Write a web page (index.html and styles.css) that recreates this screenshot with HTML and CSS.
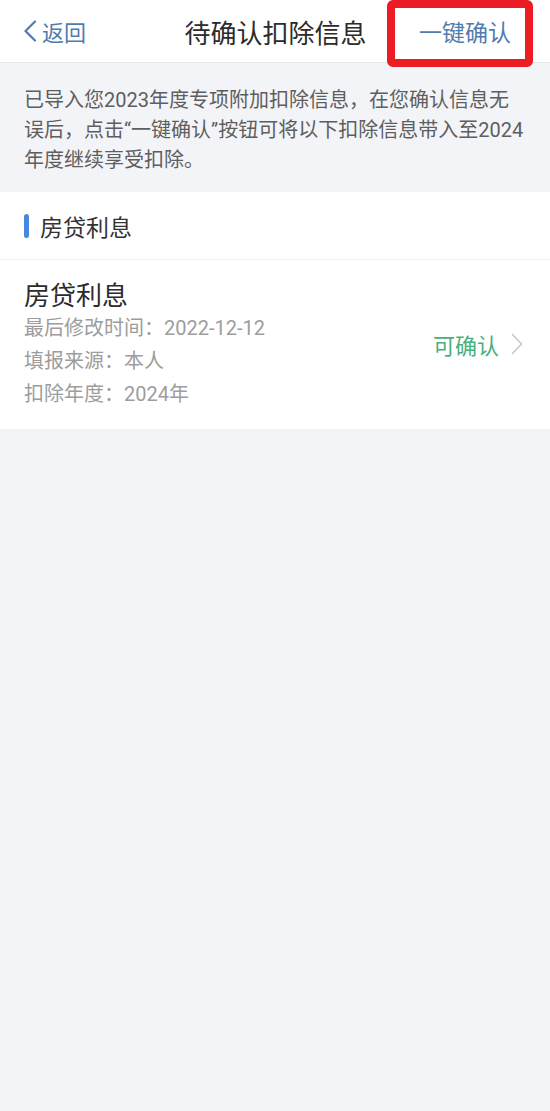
FILE: index.html
```html
<!DOCTYPE html>
<html lang="zh-CN">
<head>
<meta charset="utf-8">
<title>待确认扣除信息</title>
<link rel="stylesheet" href="styles.css">
</head>
<body>
<div class="page">
  <header class="nav">
    <div class="back">
      <svg class="back-icon" width="14" height="22" viewBox="0 0 14 22"><path d="M12 1.5 L2.5 11 L12 20.5" fill="none" stroke="#4f7cae" stroke-width="2.2" stroke-linecap="round" stroke-linejoin="round"/></svg>
      <span>返回</span>
    </div>
    <div class="title">待确认扣除信息</div>
    <div class="action">一键确认</div>
    <div class="highlight"></div>
  </header>
  <p class="notice">已导入您2023年度专项附加扣除信息，在您确认信息无误后，点击“一键确认”按钮可将以下扣除信息带入至2024年度继续享受扣除。</p>
  <section class="group">
    <div class="group-head"><span class="bar"></span><span>房贷利息</span></div>
    <div class="item">
      <div class="item-info">
        <div class="item-title">房贷利息</div>
        <div class="item-line">最后修改时间：2022-12-12</div>
        <div class="item-line">填报来源：本人</div>
        <div class="item-line">扣除年度：2024年</div>
      </div>
      <div class="item-status">
        <span>可确认</span>
        <svg width="12" height="22" viewBox="0 0 12 22"><path d="M1.5 1.5 L10.5 11 L1.5 20.5" fill="none" stroke="#c8c8c8" stroke-width="1.6" stroke-linecap="round" stroke-linejoin="round"/></svg>
      </div>
    </div>
  </section>
</div>
</body>
</html>
```
FILE: styles.css
```css
* { box-sizing: border-box; }
html, body { margin: 0; padding: 0; }
body {
  background: #f3f4f8;
  font-family: Roboto, "Noto Sans CJK SC", sans-serif;
  width: 550px;
  min-height: 1111px;
}
.page { display: flex; flex-direction: column; }
.nav {
  position: relative;
  height: 63px;
  background: #fff;
  border-bottom: 1px solid #e6e7eb;
  display: flex;
  align-items: center;
  padding: 0 24px 0 23px;
}
.back {
  display: flex;
  align-items: center;
  gap: 5px;
  color: #4f7cae;
  font-size: 22px;
  width: 150px;
}
.back-icon { flex: none; }
.title {
  flex: 1;
  text-align: center;
  font-size: 26px;
  color: #2b2b2b;
  margin-left: 2px;
}
.action {
  width: 150px;
  text-align: right;
  font-size: 23px;
  color: #4f7cae;
  padding-right: 15px;
}
.highlight {
  position: absolute;
  left: 387px;
  top: 0;
  width: 146px;
  height: 67px;
  border: 8px solid #ec1c24;
  border-radius: 6px;
}
.notice {
  margin: 0;
  padding: 22px 24px 7px 24px;
  font-size: 20px;
  line-height: 30px;
  color: #5e5e5e;
  height: 129px;
}
.group { background: #fff; }
.group-head {
  height: 68px;
  display: flex;
  align-items: center;
  gap: 11px;
  padding-left: 24px;
  font-size: 23px;
  color: #333;
  border-bottom: 1px solid #eeeff2;
}
.bar {
  width: 5px;
  height: 24px;
  border-radius: 3px;
  background: #4a86dc;
}
.item {
  display: flex;
  align-items: center;
  padding: 20px 27px 18px 24px;
}
.item-info { flex: 1; }
.item-title {
  font-size: 26px;
  line-height: 32px;
  color: #2b2b2b;
}
.item-line {
  font-size: 20px;
  line-height: 33px;
  color: #9d9d9d;
}
.item-status {
  display: flex;
  align-items: center;
  gap: 12px;
  font-size: 22px;
  color: #48b07d;
  margin-top: -4px;
}
```
